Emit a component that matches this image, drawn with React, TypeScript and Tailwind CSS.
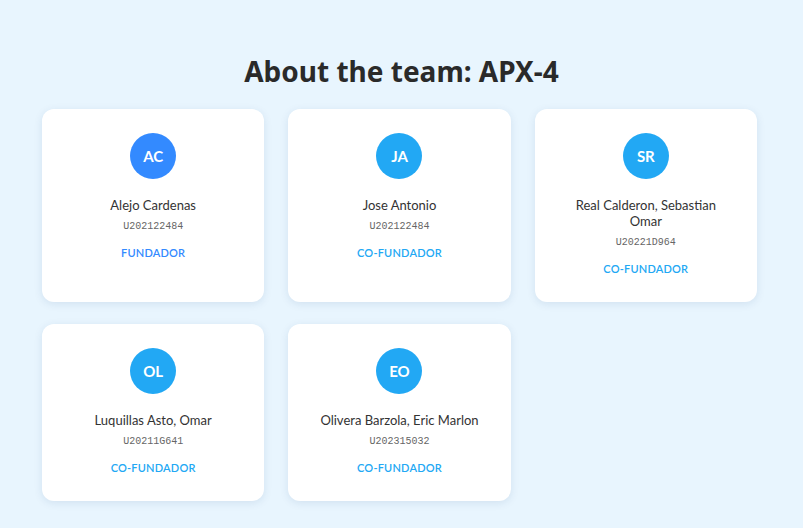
import React from "react";

type Member = { initials: string; name: string; id: string; role: string; primary?: boolean };

const members: Member[] = [
  { initials: "AC", name: "Alejo Cardenas", id: "U202122484", role: "FUNDADOR", primary: true },
  { initials: "JA", name: "Jose Antonio", id: "U202122484", role: "CO-FUNDADOR" },
  { initials: "SR", name: "Real Calderon, Sebastian Omar", id: "U20221D964", role: "CO-FUNDADOR" },
  { initials: "OL", name: "Luquillas Asto, Omar", id: "U20211G641", role: "CO-FUNDADOR" },
  { initials: "EO", name: "Olivera Barzola, Eric Marlon", id: "U202315032", role: "CO-FUNDADOR" },
];

function Card({ m }: { m: Member }) {
  return (
    <div className="bg-white rounded-[12px] shadow-[0_2px_8px_rgba(0,60,120,0.10)] flex flex-col items-center pt-6 pb-[26px] px-[30px] text-center">
      <div
        className={
          m.primary
            ? "w-[46px] h-[46px] rounded-full bg-[#338aff] flex items-center justify-center text-white font-bold text-[15px]"
            : "w-[46px] h-[46px] rounded-full bg-[#22a8f4] flex items-center justify-center text-white font-bold text-[15px]"
        }
      >
        {m.initials}
      </div>
      <div className="mt-[18px] text-[13px] leading-[16px] text-[#333]">{m.name}</div>
      <div className="mt-[7px] text-[10px] leading-[14px] text-[#666] font-['Liberation_Mono',monospace]">{m.id}</div>
      <div
        className={
          m.primary
            ? "mt-[12px] text-[11px] leading-[14px] font-semibold tracking-[0.2px] text-[#338aff]"
            : "mt-[12px] text-[11px] leading-[14px] font-semibold tracking-[0.2px] text-[#22a8f4]"
        }
      >
        {m.role}
      </div>
    </div>
  );
}

export default function App() {
  return (
    <div className="min-h-[528px] bg-[#e8f5fe] font-['Lato',sans-serif] px-[42px] pt-[53px] pb-6">
      <h1 className="text-center text-[28px] leading-[36px] font-bold text-[#2a2a2a] mb-[20px] font-['Noto_Sans',sans-serif]">About the team: APX-4</h1>
      <div className="grid grid-cols-3 gap-x-6 gap-y-[22px] w-[715px]">
        {members.map((m, i) => (
          <Card key={i} m={m} />
        ))}
      </div>
    </div>
  );
}
